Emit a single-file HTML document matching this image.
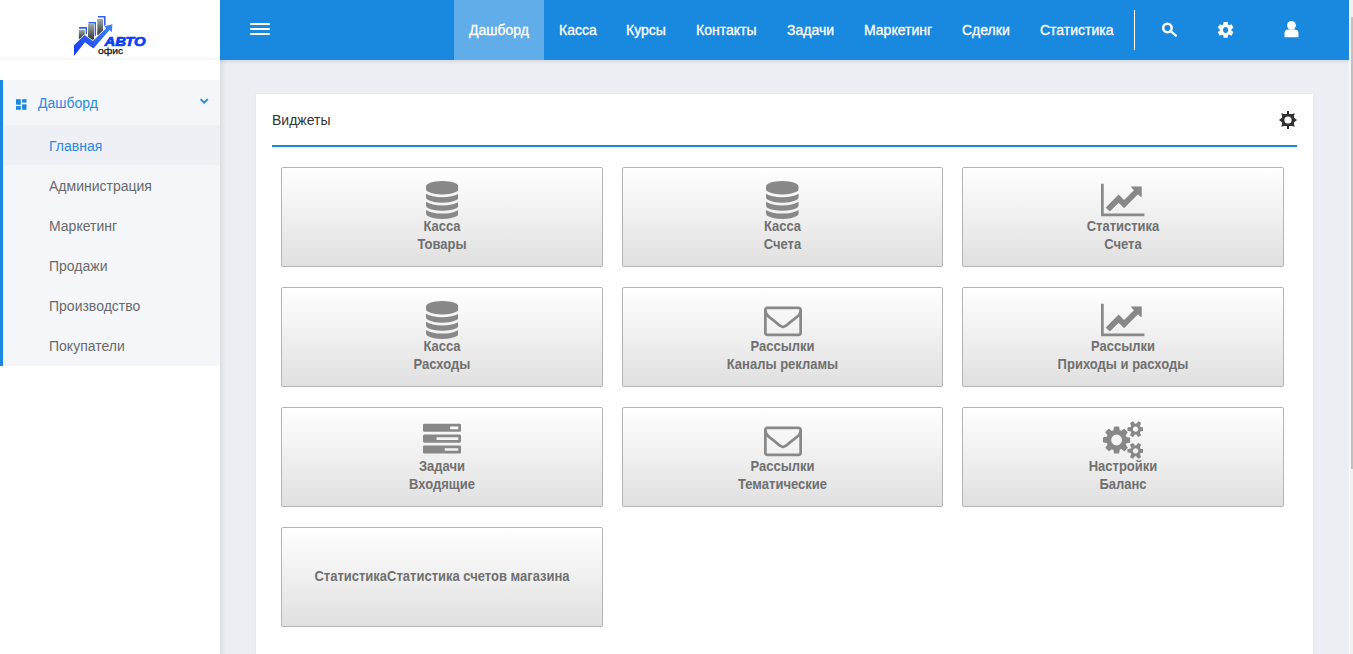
<!DOCTYPE html>
<html><head><meta charset="utf-8">
<style>
*{box-sizing:border-box;margin:0;padding:0}
html,body{width:1353px;height:654px;overflow:hidden;background:#ebeef3;font-family:"Liberation Sans",sans-serif}
.abs{position:absolute}
svg.ic{position:absolute;display:block}
#sidebar{position:absolute;left:0;top:0;width:220px;height:654px;background:#fff;z-index:3}
#logo{position:absolute;left:0;top:0;width:220px;height:60px;background:linear-gradient(to bottom,rgba(0,0,0,0) 56px,rgba(0,0,0,.035) 60px)}
#menu{position:absolute;left:0;top:80px;width:220px;height:286px;background:#f4f6fa;border-left:3px solid #1a88e0}
.mi{position:absolute;left:0;width:217px;height:40px;font-size:14px;color:#6a6a6a;line-height:40px;white-space:nowrap;padding-top:1px}
#header{position:absolute;left:220px;top:0;width:1129px;height:60px;background:#1989e0;z-index:2}
.nav{position:absolute;top:0;height:60px;line-height:60px;font-size:14px;color:#fff;padding:0 15px;white-space:nowrap;-webkit-text-stroke:0.3px #fff}
.nav.active{background:#61ade9}
#card{position:absolute;left:256px;top:94px;width:1057px;height:600px;background:#fff;box-shadow:0 0 1.5px rgba(0,0,0,.08)}
.btn{position:absolute;height:100px;border:1px solid #b4b4b4;border-radius:2px;background:linear-gradient(to bottom,#fff 0%,#e0e0e0 100%);text-align:center;color:#707070;font-weight:bold;font-size:13px;line-height:18px}
.btn .t{position:absolute;left:0;width:100%;white-space:nowrap}
.btn .t span{display:block;height:18px;transform:scaleY(1.07);transform-origin:50% 13.5px}
#sb{position:absolute;left:1349px;top:0;width:4px;height:654px;background:#f1f1f1;border-left:1px solid #fdfdfd}
#thumb{position:absolute;left:1351px;top:17px;width:2px;height:452px;background:#c1c1c1}
</style></head><body>

<div id="sidebar">
  <div id="logo">
    <svg class="ic" style="left:0;top:0" width="220" height="60" viewBox="0 0 220 60">
      <defs>
        <linearGradient id="bg" x1="0" y1="0" x2="0" y2="1">
          <stop offset="0" stop-color="#a3aaaa"/><stop offset="1" stop-color="#2f3434"/>
        </linearGradient>
        <linearGradient id="zg" x1="74" y1="56" x2="112" y2="24" gradientUnits="userSpaceOnUse">
          <stop offset="0" stop-color="#1838ee"/><stop offset="1" stop-color="#3f86f6"/>
        </linearGradient>
      </defs>
      <g fill="#2d62f4">
        <path d="M79.1 27.1H87V34.1H85.7V28.8H79.1Z"/>
        <path d="M88.5 21.9H96V35.8H94.7V23.6H88.5Z"/>
        <path d="M97.9 15.9H105.6V26.8H103.9V17.6H97.9Z"/>
      </g>
      <rect x="78.85" y="29.8" width="6" height="9" fill="url(#bg)"/>
      <rect x="88.05" y="23.85" width="6" height="16" fill="url(#bg)"/>
      <rect x="97.3" y="18.9" width="5.7" height="16" fill="url(#bg)"/>
      <path fill="url(#zg)" stroke="#fff" stroke-width="1.3" paint-order="stroke" d="M74 56L74 45.2L84.6 35L92.9 41L106.2 28.3L104.2 26.3L112.4 24.2L111.9 32.3L109.6 30.1L93.4 48.6L84.9 42.3Z"/>
      <text x="104.6" y="45.5" font-family="Liberation Sans" font-weight="bold" font-style="italic" font-size="12.4" fill="#0b3ff2" stroke="#0b3ff2" stroke-width="0.7" textLength="41" lengthAdjust="spacingAndGlyphs">АВТО</text>
      <text x="97.9" y="53.8" font-family="Liberation Sans" font-size="9.6" fill="#111" stroke="#111" stroke-width="0.25" textLength="25.2" lengthAdjust="spacingAndGlyphs">офис</text>
    </svg>
  </div>
  <div id="menu">
    <svg class="ic" style="left:13px;top:19px" width="12" height="12" viewBox="16 99 12 12">
      <g fill="#1a88e0"><rect x="16" y="99.2" width="4.8" height="5.5"/><rect x="22.1" y="99.2" width="4.4" height="3.4"/><rect x="16" y="106.1" width="4.8" height="3.7"/><rect x="22.1" y="104.3" width="4.4" height="5.5"/></g>
    </svg>
    <svg class="ic" style="left:194px;top:15px" width="12" height="10" viewBox="197 95 12 10">
      <path d="M200.6 99.1L204.2 102.6L207.8 99.1" fill="none" stroke="#2a8ae0" stroke-width="2"/>
    </svg>
    <div class="mi" style="top:0;height:44px;line-height:44px;color:#2a8ae0;padding-left:35px;padding-top:0.5px">Дашборд</div>
    <div class="mi" style="top:45px;background:#eef0f5;color:#2a8ae0;padding-left:46px">Главная</div>
    <div class="mi" style="top:85px;padding-left:46px">Администрация</div>
    <div class="mi" style="top:125px;padding-left:46px">Маркетинг</div>
    <div class="mi" style="top:165px;padding-left:46px">Продажи</div>
    <div class="mi" style="top:205px;padding-left:46px">Производство</div>
    <div class="mi" style="top:245px;padding-left:46px">Покупатели</div>
  </div>
</div>

<div id="header">
  <div class="abs" style="left:30px;top:23px;width:20px;height:2px;background:#fff;border-radius:1px"></div>
  <div class="abs" style="left:30px;top:28px;width:20px;height:2px;background:#fff;border-radius:1px"></div>
  <div class="abs" style="left:30px;top:33px;width:20px;height:2px;background:#fff;border-radius:1px"></div>
  <div class="nav active" style="left:234px">Дашборд</div>
  <div class="nav" style="left:324px">Касса</div>
  <div class="nav" style="left:391px">Курсы</div>
  <div class="nav" style="left:461px">Контакты</div>
  <div class="nav" style="left:552px">Задачи</div>
  <div class="nav" style="left:629px">Маркетинг</div>
  <div class="nav" style="left:727px">Сделки</div>
  <div class="nav" style="left:805px">Статистика</div>
  <div class="abs" style="left:914px;top:10px;width:1px;height:40px;background:#fff"></div>
  <!-- search -->
  <svg class="ic" style="left:0;top:0" width="1129" height="60" viewBox="220 0 1129 60">
    <circle cx="1167.4" cy="27.9" r="4.25" fill="none" stroke="#fff" stroke-width="2.5"/>
    <path d="M1170.6 31.2L1175.9 35.7" stroke="#fff" stroke-width="2.3" stroke-linecap="round"/>
    <path fill="#fff" fill-rule="evenodd" d="M1223.30 24.47L1223.57 21.95L1227.63 21.95L1227.90 24.47L1228.23 24.62L1228.55 24.79L1228.86 24.98L1229.16 25.19L1231.47 24.17L1233.49 27.68L1231.45 29.17L1231.49 29.54L1231.50 29.90L1231.49 30.26L1231.45 30.63L1233.49 32.12L1231.47 35.63L1229.16 34.61L1228.86 34.82L1228.55 35.01L1228.23 35.18L1227.90 35.33L1227.63 37.85L1223.57 37.85L1223.30 35.33L1222.97 35.18L1222.65 35.01L1222.34 34.82L1222.04 34.61L1219.73 35.63L1217.71 32.12L1219.75 30.63L1219.71 30.26L1219.70 29.90L1219.71 29.54L1219.75 29.17L1217.71 27.68L1219.73 24.17L1222.04 25.19L1222.34 24.98L1222.65 24.79L1222.97 24.62ZM1223.10 29.90a2.5 3.0 0 1 0 5.00 0a2.5 3.0 0 1 0 -5.00 0Z"/>
    <circle cx="1291.5" cy="25.3" r="4.4" fill="#fff"/>
    <path fill="#fff" d="M1284.5 37.2V33.5Q1284.5 29.6 1288.5 29.6H1294.5Q1298.5 29.6 1298.5 33.5V37.2Z"/>
  </svg>
</div>

<div id="card">
  <div class="abs" style="left:16px;top:18px;font-size:14px;color:#333;line-height:16px">Виджеты</div>
  <svg class="ic" style="left:1022px;top:16px" width="20" height="20" viewBox="1278 110 20 20">
    <g fill="#333"><path fill-rule="evenodd" d="M1281.3 113.3L1284 114H1292L1294.7 113.3L1294 116V124L1294.7 126.7L1292 126H1284L1281.3 126.7L1282 124V116ZM1284.4 120a3.6 3.6 0 1 0 7.2 0a3.6 3.6 0 1 0 -7.2 0Z"/>
    <path d="M1287 111H1289V114.5H1287Z M1287 125.5H1289V129H1287Z M1282.5 117.2L1279 120L1282.5 122.8Z M1293.5 117.2L1297 120L1293.5 122.8Z"/></g>
  </svg>
  <div class="abs" style="left:16px;top:51px;width:1025px;height:2px;background:#1a88e0"></div>
</div>
<div class='btn' style='left:281px;top:167px;width:322px'><svg class='ic' style='left:143.71px;top:13.23px;width:32.57px;height:38px' viewBox='0 0 1536 1792'><path fill='#888888' transform='translate(0,1536) scale(1,-1)' d='M768 768q237 0 443 43t325 127v-170q0 -69 -103 -128t-280 -93.5t-385 -34.5t-385 34.5t-280 93.5t-103 128v170q119 -84 325 -127t443 -43zM768 0q237 0 443 43t325 127v-170q0 -69 -103 -128t-280 -93.5t-385 -34.5t-385 34.5t-280 93.5t-103 128v170q119 -84 325 -127 t443 -43zM768 384q237 0 443 43t325 127v-170q0 -69 -103 -128t-280 -93.5t-385 -34.5t-385 34.5t-280 93.5t-103 128v170q119 -84 325 -127t443 -43zM768 1536q208 0 385 -34.5t280 -93.5t103 -128v-128q0 -69 -103 -128t-280 -93.5t-385 -34.5t-385 34.5t-280 93.5 t-103 128v128q0 69 103 128t280 93.5t385 34.5z'/></svg><div class='t' style='top:49.6px'><span>Касса</span><span>Товары</span></div></div>
<div class='btn' style='left:622px;top:167px;width:321px'><svg class='ic' style='left:143.21px;top:13.23px;width:32.57px;height:38px' viewBox='0 0 1536 1792'><path fill='#888888' transform='translate(0,1536) scale(1,-1)' d='M768 768q237 0 443 43t325 127v-170q0 -69 -103 -128t-280 -93.5t-385 -34.5t-385 34.5t-280 93.5t-103 128v170q119 -84 325 -127t443 -43zM768 0q237 0 443 43t325 127v-170q0 -69 -103 -128t-280 -93.5t-385 -34.5t-385 34.5t-280 93.5t-103 128v170q119 -84 325 -127 t443 -43zM768 384q237 0 443 43t325 127v-170q0 -69 -103 -128t-280 -93.5t-385 -34.5t-385 34.5t-280 93.5t-103 128v170q119 -84 325 -127t443 -43zM768 1536q208 0 385 -34.5t280 -93.5t103 -128v-128q0 -69 -103 -128t-280 -93.5t-385 -34.5t-385 34.5t-280 93.5 t-103 128v128q0 69 103 128t280 93.5t385 34.5z'/></svg><div class='t' style='top:49.6px'><span>Касса</span><span>Счета</span></div></div>
<div class='btn' style='left:962px;top:167px;width:322px'><svg class='ic' style='left:138.29px;top:13.23px;width:43.43px;height:38px' viewBox='0 0 2048 1792'><path fill='#888888' transform='translate(0,1536) scale(1,-1)' d='M2048 0v-128h-2048v1536h128v-1408h1920zM1920 1248v-435q0 -21 -19.5 -29.5t-35.5 7.5l-121 121l-633 -633q-10 -10 -23 -10t-23 10l-233 233l-416 -416l-192 192l585 585q10 10 23 10t23 -10l233 -233l464 464l-121 121q-16 16 -7.5 35.5t29.5 19.5h435q14 0 23 -9 t9 -23z'/></svg><div class='t' style='top:49.6px'><span>Статистика</span><span>Счета</span></div></div>
<div class='btn' style='left:281px;top:287px;width:322px'><svg class='ic' style='left:143.71px;top:13.23px;width:32.57px;height:38px' viewBox='0 0 1536 1792'><path fill='#888888' transform='translate(0,1536) scale(1,-1)' d='M768 768q237 0 443 43t325 127v-170q0 -69 -103 -128t-280 -93.5t-385 -34.5t-385 34.5t-280 93.5t-103 128v170q119 -84 325 -127t443 -43zM768 0q237 0 443 43t325 127v-170q0 -69 -103 -128t-280 -93.5t-385 -34.5t-385 34.5t-280 93.5t-103 128v170q119 -84 325 -127 t443 -43zM768 384q237 0 443 43t325 127v-170q0 -69 -103 -128t-280 -93.5t-385 -34.5t-385 34.5t-280 93.5t-103 128v170q119 -84 325 -127t443 -43zM768 1536q208 0 385 -34.5t280 -93.5t103 -128v-128q0 -69 -103 -128t-280 -93.5t-385 -34.5t-385 34.5t-280 93.5 t-103 128v128q0 69 103 128t280 93.5t385 34.5z'/></svg><div class='t' style='top:49.6px'><span>Касса</span><span>Расходы</span></div></div>
<div class='btn' style='left:622px;top:287px;width:321px'><svg class='ic' style='left:140.50px;top:13.23px;width:38.00px;height:38px' viewBox='0 0 1792 1792'><path fill='#888888' transform='translate(0,1536) scale(1,-1)' d='M1664 32v768q-32 -36 -69 -66q-268 -206 -426 -338q-51 -43 -83 -67t-86.5 -48.5t-102.5 -24.5h-1h-1q-48 0 -102.5 24.5t-86.5 48.5t-83 67q-158 132 -426 338q-37 30 -69 66v-768q0 -13 9.5 -22.5t22.5 -9.5h1472q13 0 22.5 9.5t9.5 22.5zM1664 1083v11v13.5t-0.5 13 t-3 12.5t-5.5 9t-9 7.5t-14 2.5h-1472q-13 0 -22.5 -9.5t-9.5 -22.5q0 -168 147 -284q193 -152 401 -317q6 -5 35 -29.5t46 -37.5t44.5 -31.5t50.5 -27.5t43 -9h1h1q20 0 43 9t50.5 27.5t44.5 31.5t46 37.5t35 29.5q208 165 401 317q54 43 100.5 115.5t46.5 131.5z M1792 1120v-1088q0 -66 -47 -113t-113 -47h-1472q-66 0 -113 47t-47 113v1088q0 66 47 113t113 47h1472q66 0 113 -47t47 -113z'/></svg><div class='t' style='top:49.6px'><span>Рассылки</span><span>Каналы рекламы</span></div></div>
<div class='btn' style='left:962px;top:287px;width:322px'><svg class='ic' style='left:138.29px;top:13.23px;width:43.43px;height:38px' viewBox='0 0 2048 1792'><path fill='#888888' transform='translate(0,1536) scale(1,-1)' d='M2048 0v-128h-2048v1536h128v-1408h1920zM1920 1248v-435q0 -21 -19.5 -29.5t-35.5 7.5l-121 121l-633 -633q-10 -10 -23 -10t-23 10l-233 233l-416 -416l-192 192l585 585q10 10 23 10t23 -10l233 -233l464 464l-121 121q-16 16 -7.5 35.5t29.5 19.5h435q14 0 23 -9 t9 -23z'/></svg><div class='t' style='top:49.6px'><span>Рассылки</span><span>Приходы и расходы</span></div></div>
<div class='btn' style='left:281px;top:407px;width:322px'><svg class='ic' style='left:141.00px;top:13.23px;width:38.00px;height:38px' viewBox='0 0 1792 1792'><path fill='#888888' transform='translate(0,1536) scale(1,-1)' d='M1024 128h640v128h-640v-128zM640 640h1024v128h-1024v-128zM1280 1152h384v128h-384v-128zM1792 320v-256q0 -26 -19 -45t-45 -19h-1664q-26 0 -45 19t-19 45v256q0 26 19 45t45 19h1664q26 0 45 -19t19 -45zM1792 832v-256q0 -26 -19 -45t-45 -19h-1664q-26 0 -45 19 t-19 45v256q0 26 19 45t45 19h1664q26 0 45 -19t19 -45zM1792 1344v-256q0 -26 -19 -45t-45 -19h-1664q-26 0 -45 19t-19 45v256q0 26 19 45t45 19h1664q26 0 45 -19t19 -45z'/></svg><div class='t' style='top:49.6px'><span>Задачи</span><span>Входящие</span></div></div>
<div class='btn' style='left:622px;top:407px;width:321px'><svg class='ic' style='left:140.50px;top:13.23px;width:38.00px;height:38px' viewBox='0 0 1792 1792'><path fill='#888888' transform='translate(0,1536) scale(1,-1)' d='M1664 32v768q-32 -36 -69 -66q-268 -206 -426 -338q-51 -43 -83 -67t-86.5 -48.5t-102.5 -24.5h-1h-1q-48 0 -102.5 24.5t-86.5 48.5t-83 67q-158 132 -426 338q-37 30 -69 66v-768q0 -13 9.5 -22.5t22.5 -9.5h1472q13 0 22.5 9.5t9.5 22.5zM1664 1083v11v13.5t-0.5 13 t-3 12.5t-5.5 9t-9 7.5t-14 2.5h-1472q-13 0 -22.5 -9.5t-9.5 -22.5q0 -168 147 -284q193 -152 401 -317q6 -5 35 -29.5t46 -37.5t44.5 -31.5t50.5 -27.5t43 -9h1h1q20 0 43 9t50.5 27.5t44.5 31.5t46 37.5t35 29.5q208 165 401 317q54 43 100.5 115.5t46.5 131.5z M1792 1120v-1088q0 -66 -47 -113t-113 -47h-1472q-66 0 -113 47t-47 113v1088q0 66 47 113t113 47h1472q66 0 113 -47t47 -113z'/></svg><div class='t' style='top:49.6px'><span>Рассылки</span><span>Тематические</span></div></div>
<div class='btn' style='left:962px;top:407px;width:322px'><svg class='ic' style='left:139.64px;top:13.23px;width:40.71px;height:38px' viewBox='0 0 1920 1792'><path fill='#888888' transform='translate(0,1536) scale(1,-1)' d='M896 640q0 106 -75 181t-181 75t-181 -75t-75 -181t75 -181t181 -75t181 75t75 181zM1664 128q0 52 -38 90t-90 38t-90 -38t-38 -90q0 -53 37.5 -90.5t90.5 -37.5t90.5 37.5t37.5 90.5zM1664 1152q0 52 -38 90t-90 38t-90 -38t-38 -90q0 -53 37.5 -90.5t90.5 -37.5 t90.5 37.5t37.5 90.5zM1280 731v-185q0 -10 -7 -19.5t-16 -10.5l-155 -24q-11 -35 -32 -76q34 -48 90 -115q7 -11 7 -20q0 -12 -7 -19q-23 -30 -82.5 -89.5t-78.5 -59.5q-11 0 -21 7l-115 90q-37 -19 -77 -31q-11 -108 -23 -155q-7 -24 -30 -24h-186q-11 0 -20 7.5t-10 17.5 l-23 153q-34 10 -75 31l-118 -89q-7 -7 -20 -7q-11 0 -21 8q-144 133 -144 160q0 9 7 19q10 14 41 53t47 61q-23 44 -35 82l-152 24q-10 1 -17 9.5t-7 19.5v185q0 10 7 19.5t16 10.5l155 24q11 35 32 76q-34 48 -90 115q-7 11 -7 20q0 12 7 20q22 30 82 89t79 59q11 0 21 -7 l115 -90q34 18 77 32q11 108 23 154q7 24 30 24h186q11 0 20 -7.5t10 -17.5l23 -153q34 -10 75 -31l118 89q8 7 20 7q11 0 21 -8q144 -133 144 -160q0 -8 -7 -19q-12 -16 -42 -54t-45 -60q23 -48 34 -82l152 -23q10 -2 17 -10.5t7 -19.5zM1920 198v-140q0 -16 -149 -31 q-12 -27 -30 -52q51 -113 51 -138q0 -4 -4 -7q-122 -71 -124 -71q-8 0 -46 47t-52 68q-20 -2 -30 -2t-30 2q-14 -21 -52 -68t-46 -47q-2 0 -124 71q-4 3 -4 7q0 25 51 138q-18 25 -30 52q-149 15 -149 31v140q0 16 149 31q13 29 30 52q-51 113 -51 138q0 4 4 7q4 2 35 20 t59 34t30 16q8 0 46 -46.5t52 -67.5q20 2 30 2t30 -2q51 71 92 112l6 2q4 0 124 -70q4 -3 4 -7q0 -25 -51 -138q17 -23 30 -52q149 -15 149 -31zM1920 1222v-140q0 -16 -149 -31q-12 -27 -30 -52q51 -113 51 -138q0 -4 -4 -7q-122 -71 -124 -71q-8 0 -46 47t-52 68 q-20 -2 -30 -2t-30 2q-14 -21 -52 -68t-46 -47q-2 0 -124 71q-4 3 -4 7q0 25 51 138q-18 25 -30 52q-149 15 -149 31v140q0 16 149 31q13 29 30 52q-51 113 -51 138q0 4 4 7q4 2 35 20t59 34t30 16q8 0 46 -46.5t52 -67.5q20 2 30 2t30 -2q51 71 92 112l6 2q4 0 124 -70 q4 -3 4 -7q0 -25 -51 -138q17 -23 30 -52q149 -15 149 -31z'/></svg><div class='t' style='top:49.6px'><span>Настройки</span><span>Баланс</span></div></div>
<div class='btn' style='left:281px;top:527px;width:322px'><div class='t' style='top:39.6px'><span>СтатистикаСтатистика счетов магазина</span></div></div>
<div class="abs" style="left:220px;top:60px;width:7px;height:594px;background:linear-gradient(to right,rgba(0,0,0,.075),rgba(0,0,0,.03) 40%,rgba(0,0,0,0))"></div>
<div class="abs" style="left:220px;top:60px;width:1129px;height:5px;background:linear-gradient(to bottom,rgba(0,0,0,.09),rgba(0,0,0,.03) 50%,rgba(0,0,0,0))"></div>
<div id="sb"></div><div id="thumb"></div>
</body></html>
